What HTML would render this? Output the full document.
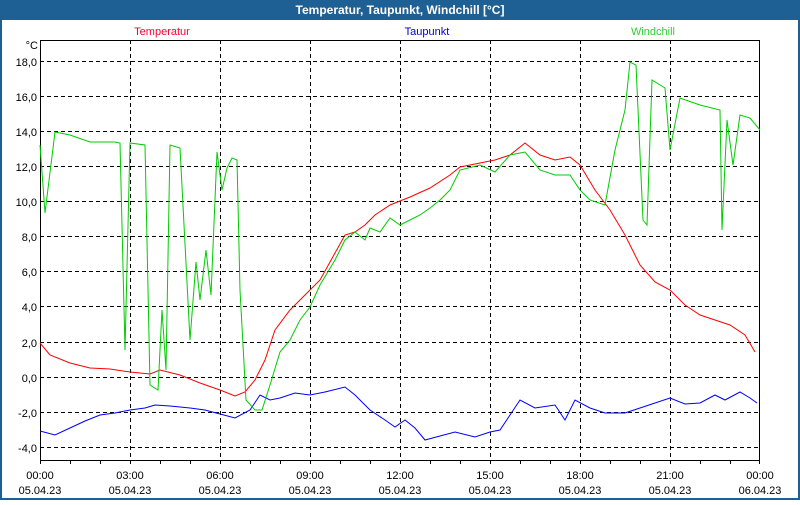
<!DOCTYPE html>
<html><head><meta charset="utf-8"><style>
body{margin:0;width:800px;height:500px;overflow:hidden;background:#fff;font-family:"Liberation Sans",sans-serif}
</style></head><body>
<svg width="800" height="500" xmlns="http://www.w3.org/2000/svg" font-family="Liberation Sans, sans-serif" font-size="11">
<rect x="0" y="0" width="800" height="500" fill="#1e5f94"/>
<rect x="2" y="20" width="796" height="478" fill="#fff"/>
<text x="400" y="14" fill="#fff" font-weight="bold" font-size="12" text-anchor="middle">Temperatur, Taupunkt, Windchill [°C]</text>
<text x="162" y="35" fill="#ff0033" text-anchor="middle">Temperatur</text>
<text x="427" y="35" fill="#0000cc" text-anchor="middle">Taupunkt</text>
<text x="653" y="35" fill="#33cc33" text-anchor="middle">Windchill</text>
<g stroke="#000" stroke-dasharray="4,3" stroke-width="1">
<path d="M130.5 40V460M220.5 40V460M310.5 40V460M400.5 40V460M490.5 40V460M580.5 40V460M670.5 40V460"/>
<path d="M40 61.5H760M40 96.5H760M40 131.5H760M40 166.5H760M40 201.5H760M40 236.5H760M40 271.5H760M40 306.5H760M40 342.5H760M40 377.5H760M40 412.5H760M40 447.5H760"/>
</g>
<rect x="40.5" y="40.5" width="719" height="420" fill="none" stroke="#000"/>
<g stroke="#000"><path d="M70.5 460v4M100.5 460v4M130.5 460v4M160.5 460v4M190.5 460v4M220.5 460v4M250.5 460v4M280.5 460v4M310.5 460v4M340.5 460v4M370.5 460v4M400.5 460v4M430.5 460v4M460.5 460v4M490.5 460v4M520.5 460v4M550.5 460v4M580.5 460v4M610.5 460v4M640.5 460v4M670.5 460v4M700.5 460v4M730.5 460v4M40.5 460v4M759.5 460v4"/></g>
<g fill="#000" text-anchor="end">
<text x="38" y="49">°C</text>
<text x="37" y="66">18,0</text><text x="37" y="101">16,0</text><text x="37" y="136">14,0</text><text x="37" y="171">12,0</text><text x="37" y="206">10,0</text><text x="37" y="241">8,0</text><text x="37" y="276">6,0</text><text x="37" y="311">4,0</text><text x="37" y="347">2,0</text><text x="37" y="382">0,0</text><text x="37" y="417">-2,0</text><text x="37" y="452">-4,0</text>
</g>
<g fill="#000" text-anchor="middle">
<text x="40" y="479">00:00</text><text x="40" y="494">05.04.23</text>
<text x="130" y="479">03:00</text><text x="130" y="494">05.04.23</text>
<text x="220" y="479">06:00</text><text x="220" y="494">05.04.23</text>
<text x="310" y="479">09:00</text><text x="310" y="494">05.04.23</text>
<text x="400" y="479">12:00</text><text x="400" y="494">05.04.23</text>
<text x="490" y="479">15:00</text><text x="490" y="494">05.04.23</text>
<text x="580" y="479">18:00</text><text x="580" y="494">05.04.23</text>
<text x="670" y="479">21:00</text><text x="670" y="494">05.04.23</text>
<text x="760" y="479">00:00</text><text x="760" y="494">06.04.23</text>
</g>
<polyline fill="none" stroke="#ff0000" points="40,343 50,355 70,363 90,368 110,369 130,372 150,374 160,370 180,375 200,383 220,390 235,396 245,392 255,380 265,360 275,330 290,310 300,300 320,280 330,262 345,235 355,232 365,225 375,215 390,205 410,197 430,188 450,175 460,167 480,163 495,160 510,155 525,143 540,155 555,160 570,157 580,165 595,190 610,210 625,235 640,265 655,282 670,290 685,305 700,315 715,320 730,325 745,335 755,352"/>
<polyline fill="none" stroke="#0000ff" points="40,431 55,435 70,428 85,421 100,415 115,413 130,410 145,408 155,405 170,406 190,408 205,410 220,414 235,418 250,410 260,395 270,400 280,398 295,393 310,395 325,392 345,387 355,395 370,410 385,420 395,427 405,420 415,428 425,440 440,436 455,432 475,437 490,432 500,430 510,415 520,400 535,408 555,405 565,420 575,400 590,408 605,413 625,413 640,408 655,403 670,398 685,404 700,403 715,395 725,400 740,392 750,398 757,403"/>
<polyline fill="none" stroke="#00cc00" points="40,145 45,213 55,132 70,135 90,142 115,142 120,143 125,350 130,143 145,145 150,385 158,390 162,310 166,370 170,145 180,148 190,340 196,262 200,300 206,250 211,295 217,152 222,190 227,168 232,158 237,160 240,290 246,400 255,410 262,410 270,385 280,352 290,340 300,320 310,307 320,285 335,260 345,240 355,232 365,240 370,228 380,232 390,218 400,225 410,220 420,215 430,208 440,200 450,190 460,170 480,165 495,172 510,155 525,152 540,170 555,175 570,175 580,190 590,200 605,205 615,150 625,110 630,62 636,65 643,220 647,225 652,80 665,88 670,150 680,98 700,105 720,110 722,230 727,120 733,165 740,115 750,118 760,130"/>
</svg>
</body></html>
